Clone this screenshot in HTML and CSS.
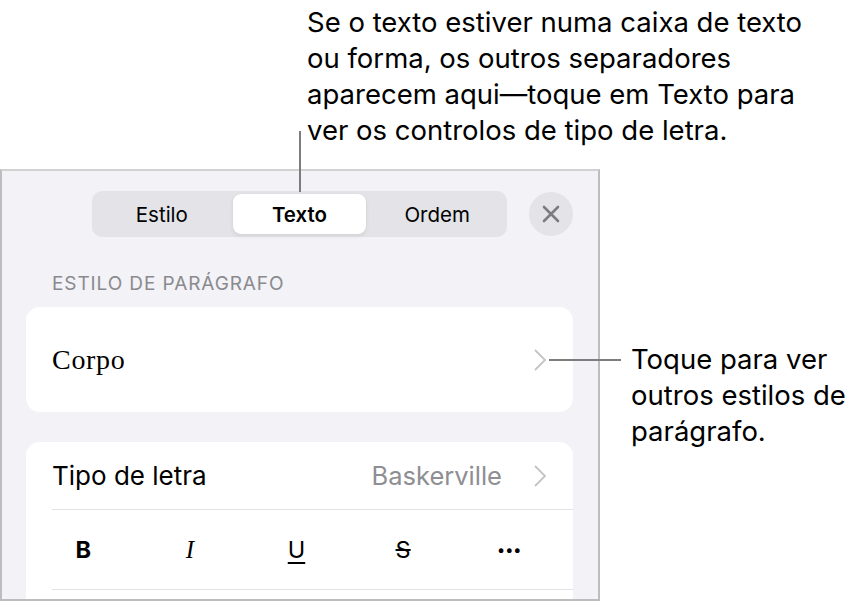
FILE: index.html
```html
<!DOCTYPE html>
<html lang="pt">
<head>
<meta charset="utf-8">
<title>Texto</title>
<link rel="stylesheet" href="styles.css">
</head>
<body>
<div class="figure">
  <p class="callout callout-top">Se o texto estiver numa caixa de texto<br>ou forma, os outros separadores<br>aparecem aqui—toque em Texto para<br>ver os controlos de tipo de letra.</p>
  <div class="stage">
    <div class="panel">
      <div class="header">
        <div class="segmented">
          <span class="segment">Estilo</span>
          <span class="segment selected">Texto</span>
          <span class="segment">Ordem</span>
        </div>
        <span class="close">
          <svg width="18" height="18" viewBox="0 0 18 18"><path d="M2 2 L16 16 M16 2 L2 16" stroke="#7b7b80" stroke-width="2.6" stroke-linecap="round" fill="none"/></svg>
        </span>
      </div>
      <div class="section-label">ESTILO DE PARÁGRAFO</div>
      <div class="card style-card">
        <span class="style-name">Corpo</span>
        <svg class="chevron" width="14" height="22" viewBox="0 0 14 22"><path d="M2 1 L12 11 L2 21" stroke="#c4c4c7" stroke-width="1.8" fill="none"/></svg>
      </div>
      <div class="card font-card">
        <div class="font-row">
          <span class="font-label">Tipo de letra</span>
          <span class="font-value">Baskerville</span>
          <svg class="chevron" width="14" height="22" viewBox="0 0 14 22"><path d="M2 1 L12 11 L2 21" stroke="#c4c4c7" stroke-width="1.8" fill="none"/></svg>
        </div>
        <div class="format-row">
          <span class="fmt fmt-b">B</span>
          <span class="fmt fmt-i">I</span>
          <span class="fmt fmt-u">U</span>
          <span class="fmt fmt-s">S</span>
          <span class="fmt fmt-more">•••</span>
        </div>
        <div class="divider"></div>
      </div>
    </div>
    <p class="callout callout-right">Toque para ver<br>outros estilos de<br>parágrafo.</p>
    <span class="leader leader-top"></span>
    <span class="leader leader-right"></span>
  </div>
</div>
</body>
</html>
```

FILE: styles.css
```css
* { box-sizing: border-box; }
html, body {
  margin: 0;
  padding: 0;
  background: #ffffff;
}
body {
  width: 859px;
  height: 601px;
  overflow: hidden;
  font-family: Inter, "Noto Sans", "Liberation Sans", sans-serif;
  color: #000;
}
.figure {
  position: relative;
  width: 859px;
  height: 601px;
  overflow: hidden;
}
.callout {
  margin: 0;
  font-size: 27.5px;
  line-height: 36px;
  color: #000;
}
.callout-top {
  padding: 4px 0 0 307px;
  height: 169px;
  white-space: nowrap;
}
.stage {
  display: flex;
  align-items: flex-start;
}
.panel {
  width: 600px;
  height: 432px;
  flex: none;
  overflow: hidden;
  background: #f2f2f7;
  border: 2px solid #bdbdbd;
  border-top-color: #d2d2d2;
  padding: 20px 25px 0 24px;
}
.callout-right {
  margin: 172px 0 0 31px;
  white-space: nowrap;
}
.header {
  display: grid;
  grid-template-columns: 1fr auto 1fr;
  align-items: center;
}
.segmented {
  grid-column: 2;
  width: 415px;
  height: 46px;
  background: #e3e3e8;
  border-radius: 10px;
  padding: 3px;
  display: grid;
  grid-template-columns: 1fr 1fr 1fr;
  gap: 4px;
}
.segment {
  display: flex;
  align-items: center;
  justify-content: center;
  font-size: 20.5px;
  color: #000;
  border-radius: 8px;
}
.segment.selected {
  background: #fff;
  font-weight: 600;
  box-shadow: 0 2px 5px rgba(0,0,0,0.08), 0 0 1px rgba(0,0,0,0.08);
}
.close {
  grid-column: 3;
  justify-self: end;
  width: 44px;
  height: 44px;
  border-radius: 50%;
  background: #e3e3e8;
  display: flex;
  align-items: center;
  justify-content: center;
}
.section-label {
  margin: 37px 0 0 26px;
  font-size: 19px;
  line-height: 20px;
  color: #8a8a8e;
  letter-spacing: 0.9px;
}
.card {
  background: #fff;
  border-radius: 14px;
}
.style-card {
  margin-top: 13px;
  height: 105px;
  display: flex;
  align-items: center;
  justify-content: space-between;
  padding: 0 26px 0 26px;
}
.style-name {
  font-family: "Liberation Serif", "DejaVu Serif", serif;
  font-size: 28px;
  letter-spacing: 0.7px;
  color: #000;
}
.chevron { flex: none; }
.font-card {
  margin-top: 30px;
  height: 170px;
  padding-left: 26px;
}
.font-row {
  height: 68px;
  display: flex;
  align-items: center;
  padding-right: 26px;
  border-bottom: 1px solid #e3e3e6;
}
.font-label {
  font-size: 26px;
  flex: 1;
}
.font-value {
  font-size: 25.5px;
  color: #8e8e93;
  margin-right: 31px;
}
.format-row {
  height: 79px;
  display: grid;
  grid-template-columns: repeat(5, 1fr);
  align-items: center;
  margin-left: -22px;
  padding-right: 10px;
}
.divider {
  height: 1px;
  background: #e3e3e6;
}
.fmt {
  text-align: center;
  font-size: 23.5px;
  color: #000;
}
.fmt-b { font-weight: 700; }
.fmt-i {
  font-family: "Liberation Serif", serif;
  font-style: italic;
  font-size: 25px;
}
.fmt-u {
  text-decoration: underline;
  text-decoration-thickness: 2px;
  text-underline-offset: 4px;
}
.fmt-s {
  text-decoration: line-through;
  text-decoration-thickness: 1.5px;
}
.fmt-more {
  font-size: 15px;
  letter-spacing: 1px;
  font-weight: 700;
}
.leader {
  position: absolute;
  background: #7d7d7d;
}
.leader-top {
  left: 299px;
  top: 131px;
  width: 2px;
  height: 61px;
}
.leader-right {
  left: 549px;
  top: 359px;
  width: 72px;
  height: 2px;
}
```
